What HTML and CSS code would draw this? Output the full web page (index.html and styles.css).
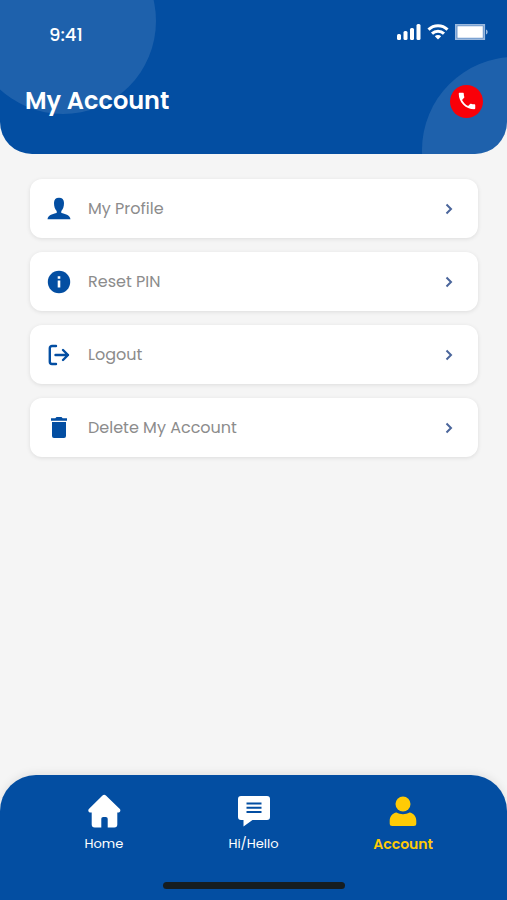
FILE: index.html
```html
<!DOCTYPE html>
<html lang="en">
<head>
    <meta charset="UTF-8">
    <meta name="viewport" content="width=device-width, initial-scale=1.0">
    <title>My Account</title>
    <link rel="stylesheet" href="styles.css">
</head>
<body>
    <header class="header">
        <div class="status-bar">
            <span class="time">9:41</span>
            <div class="status-icons">
                <svg width="24" height="16" viewBox="0 0 24 16" fill="#fff">
                    <rect x="0" y="10" width="4" height="6" rx="1.5"/>
                    <rect x="6.500" y="7" width="4" height="9" rx="1.5"/>
                    <rect x="13" y="4" width="4" height="12" rx="1.5"/>
                    <rect x="19.500" y="0" width="4" height="16" rx="1.5"/>
                </svg>
                <svg width="22" height="16" viewBox="0 0 22 16" fill="none" stroke="#fff" stroke-width="3">
                    <path d="M1.5 5.600a13.600 13.600 0 0 1 19 0"/>
                    <path d="M5 9.600a8.600 8.600 0 0 1 12 0"/>
                    <path d="M11 15.5l-3.200-3.200a4.600 4.600 0 0 1 6.400 0z" fill="#fff" stroke="none"/>
                </svg>
                <svg width="34" height="16" viewBox="0 0 34 16">
                    <rect x="0.800" y="0.8" width="28.5" height="14.4" fill="#4f82c0" stroke="#9bb9de" stroke-width="1.6"/>
                    <rect x="2.4" y="2.2" width="25.4" height="11.6" fill="#fff"/>
                    <path d="M31 5.5c2.200.8 2.200 4.200 0 5z" fill="#9bb9de"/>
                </svg>
            </div>
        </div>
        <div class="title-bar">
            <h1>My Account</h1>
            <button class="call-btn" type="button" aria-label="Call">
                <svg width="22" height="22" viewBox="0 0 24 24" fill="#fff">
                    <path d="M6.62 10.79c1.44 2.83 3.76 5.14 6.59 6.59l2.2-2.2c.27-.27.67-.36 1.02-.24 1.12.37 2.33.57 3.57.57.55 0 1 .45 1 1V20c0 .55-.45 1-1 1-9.39 0-17-7.61-17-17 0-.55.45-1 1-1h3.5c.55 0 1 .45 1 1 0 1.25.2 2.45.57 3.57.11.35.03.74-.25 1.02l-2.2 2.2z"/>
                </svg>
            </button>
        </div>
    </header>

    <main class="menu">
        <a class="menu-item" href="#profile">
            <svg class="menu-icon" viewBox="0 0 24 24">
                <path d="M12 .8c3.200 0 5 1.900 5 5.200 0 3.500-1 6.300-2.700 8v2c3.400.7 8.700 2 9.200 6.300H.5c.5-4.300 5.800-5.600 9.200-6.300v-2C8 12.300 7 9.500 7 6c0-3.300 1.800-5.200 5-5.200z"/>
            </svg>
            <span>My Profile</span>
            <svg class="arrow" viewBox="0 0 8 12"><path d="M1.500 1.500L6 6l-4.500 4.500"/></svg>
        </a>
        <a class="menu-item" href="#pin">
            <svg class="menu-icon" viewBox="0 0 24 24">
                <circle cx="12" cy="12" r="11.2"/>
                <path d="M10.700 6.200h2.600v2.500h-2.600zM10.700 10.500h2.600v7h-2.600z" fill="#fff"/>
            </svg>
            <span>Reset PIN</span>
            <svg class="arrow" viewBox="0 0 8 12"><path d="M1.500 1.500L6 6l-4.500 4.500"/></svg>
        </a>
        <a class="menu-item" href="#logout">
            <svg class="menu-icon line" viewBox="0 0 24 24">
                <path d="M9 3H5a2.200 2.200 0 0 0-2.200 2.200v13.600A2.200 2.200 0 0 0 5 21h4"/>
                <path d="M8.500 12H21M16 7l5 5-5 5"/>
            </svg>
            <span>Logout</span>
            <svg class="arrow" viewBox="0 0 8 12"><path d="M1.500 1.500L6 6l-4.500 4.500"/></svg>
        </a>
        <a class="menu-item" href="#delete">
            <svg class="menu-icon" viewBox="0 0 24 24">
                <path d="M4 2.300h4.300L9.500 1.100h5l1.200 1.200H20v2.500H4zM5 6h14v14a2 2 0 0 1-2 2H7a2 2 0 0 1-2-2z"/>
            </svg>
            <span>Delete My Account</span>
            <svg class="arrow" viewBox="0 0 8 12"><path d="M1.500 1.500L6 6l-4.500 4.500"/></svg>
        </a>
    </main>

    <footer class="footer">
        <nav class="tabs">
            <a class="tab" href="#home">
                <svg width="36" height="36" viewBox="0 0 36 36" fill="#fff">
                    <path d="M16.500 2.600a2.500 2.500 0 0 1 3.400 0l13.700 13.200c1.500 1.500.8 3.800-1.700 3.800h-.6v12c0 2-1 3-3 3h-6.600v-8.300c0-1.500-.7-2.200-2-2.200h-2.400c-1.300 0-2 .7-2 2.200v8.300H8.700c-2 0-3-1-3-3v-12h-.9c-2.500 0-3.200-2.300-1.700-3.800z"/>
                </svg>
                <span>Home</span>
            </a>
            <a class="tab" href="#hello">
                <svg width="36" height="36" viewBox="0 0 36 36">
                    <path d="M6 3h26a3 3 0 0 1 3 3v18a3 3 0 0 1-3 3H17.500l-9 6.500V27H6a3 3 0 0 1-3-3V6a3 3 0 0 1 3-3z" fill="#fff"/>
                    <path d="M11.500 10.500h15M11.500 14.700h15M11.500 19h15" stroke="#034ea2" stroke-width="2"/>
                </svg>
                <span>Hi/Hello</span>
            </a>
            <a class="tab active" href="#account">
                <svg width="36" height="36" viewBox="0 0 36 36" fill="#ffcb05">
                    <circle cx="18" cy="11" r="7.5"/>
                    <path d="M11.500 19.500c4 2.300 9 2.300 13 0 4 .5 6.800 4 6.800 8.500v2.500a2.500 2.500 0 0 1-2.500 2.500H7.200a2.500 2.500 0 0 1-2.500-2.500V28c0-4.500 2.800-8 6.800-8.500z"/>
                </svg>
                <span>Account</span>
            </a>
        </nav>
        <div class="home-indicator"></div>
    </footer>
</body>
</html>
```
FILE: styles.css
```css
* {
    box-sizing: border-box;
    margin: 0;
    padding: 0;
}

body {
    display: flex;
    flex-direction: column;
    min-height: 100vh;
    background-color: #f5f5f5;
    font-family: Poppins, Inter, sans-serif;
}

a {
    text-decoration: none;
}

/* header */
.header {
    position: relative;
    overflow: hidden;
    padding: 20px 24px 35px 25px;
    border-radius: 0 0 32px 32px;
    background-color: #034ea2;
    color: #fff;
}

.header::before,
.header::after {
    content: "";
    position: absolute;
    width: 186px;
    height: 186px;
    border-radius: 50%;
    background-color: rgba(255, 255, 255, 0.11);
}

.header::before {
    top: -72px;
    left: -30px;
}

.header::after {
    top: 57px;
    right: -101px;
}

.status-bar,
.title-bar {
    position: relative;
    z-index: 1;
    display: flex;
    align-items: center;
    justify-content: space-between;
}

.status-bar {
    height: 28px;
    padding-left: 24px;
    margin-bottom: 35px;
}

.time {
    font-size: 18px;
    font-weight: 500;
}

.status-icons {
    display: flex;
    align-items: center;
    gap: 6px;
    margin-right: -6px;
    padding-bottom: 4px;
}

h1 {
    font-size: 24px;
    line-height: 36px;
    font-weight: 600;
}

.call-btn {
    display: flex;
    align-items: center;
    justify-content: center;
    width: 33px;
    height: 33px;
    border: none;
    border-radius: 50%;
    background-color: #f90008;
    cursor: pointer;
}

/* menu */
.menu {
    flex: 1;
    display: flex;
    flex-direction: column;
    gap: 14px;
    padding: 25px 29px 25px 30px;
}

.menu-item {
    display: flex;
    align-items: center;
    height: 59px;
    padding: 0 25px 0 17px;
    border-radius: 12px;
    background-color: #fff;
    box-shadow: 0 1px 4px rgba(0, 0, 0, 0.1);
    color: #8c8c8c;
    font-size: 16px;
}

.menu-item span {
    flex: 1;
    margin-left: 17px;
}

.menu-icon {
    width: 24px;
    height: 24px;
    fill: #034ea2;
}

.menu-icon.line {
    fill: none;
    stroke: #034ea2;
    stroke-width: 2.4;
    stroke-linecap: round;
    stroke-linejoin: round;
}

.arrow {
    width: 8px;
    height: 12px;
    fill: none;
    stroke: #4a659b;
    stroke-width: 2;
}

/* bottom navigation */
.footer {
    padding: 18px 29px 11px;
    border-radius: 36px 36px 0 0;
    background-color: #034ea2;
    box-shadow: 0 -2px 8px rgba(0, 0, 0, 0.08);
}

.tabs {
    display: grid;
    grid-template-columns: repeat(3, 1fr);
}

.tab {
    display: flex;
    flex-direction: column;
    align-items: center;
    gap: 5px;
    color: #fff;
    font-size: 13px;
    line-height: 20px;
}

.tab.active {
    color: #ffcb05;
    font-size: 14px;
    font-weight: 600;
}

.home-indicator {
    width: 41%;
    max-width: 182px;
    height: 7px;
    margin: 28px auto 0;
    border-radius: 4px;
    background-color: #161d20;
}
```
